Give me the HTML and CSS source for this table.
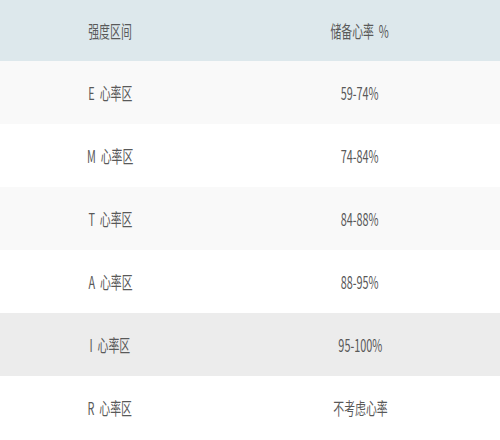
FILE: index.html
```html
<!DOCTYPE html>
<html lang="zh">
<head>
<meta charset="utf-8">
<link rel="stylesheet" href="styles.css">
</head>
<body>
<table class="zones">
  <thead>
    <tr class="head"><th class="c1"><span class="t">强度区间</span></th><th class="c2"><span class="t">储备心率&nbsp; %</span></th></tr>
  </thead>
  <tbody>
    <tr class="r-light"><td class="c1"><span class="t">E&nbsp; 心率区</span></td><td class="c2"><span class="t">59-74%</span></td></tr>
    <tr class="r-white"><td class="c1"><span class="t">M&nbsp; 心率区</span></td><td class="c2"><span class="t">74-84%</span></td></tr>
    <tr class="r-light"><td class="c1"><span class="t">T&nbsp; 心率区</span></td><td class="c2"><span class="t">84-88%</span></td></tr>
    <tr class="r-white"><td class="c1"><span class="t">A&nbsp; 心率区</span></td><td class="c2"><span class="t">88-95%</span></td></tr>
    <tr class="r-gray"><td class="c1"><span class="t">I&nbsp; 心率区</span></td><td class="c2"><span class="t">95-100%</span></td></tr>
    <tr class="r-white"><td class="c1"><span class="t">R&nbsp; 心率区</span></td><td class="c2"><span class="t">不考虑心率</span></td></tr>
  </tbody>
</table>
</body>
</html>
```
FILE: styles.css
```css
html, body {
  margin: 0;
  padding: 0;
  background: #ffffff;
}
body {
  font-family: "Noto Sans CJK SC", "Noto Sans", sans-serif;
  color: #595959;
}
.zones {
  width: 500px;
  border-collapse: collapse;
  table-layout: fixed;
}
.zones th, .zones td {
  padding: 0;
  text-align: center;
  font-size: 17px;
  font-weight: 400;
  line-height: 20px;
}
.c1 { width: 220px; }
.c2 { width: 280px; }
.head { height: 61px; background: #dde8ec; }
.zones tbody tr { height: 63px; }
.r-light { background: #f9f9f9; }
.r-white { background: #ffffff; }
.r-gray { background: #ececec; }
.t {
  display: inline-block;
  transform: scaleX(0.64);
  white-space: nowrap;
}
```
